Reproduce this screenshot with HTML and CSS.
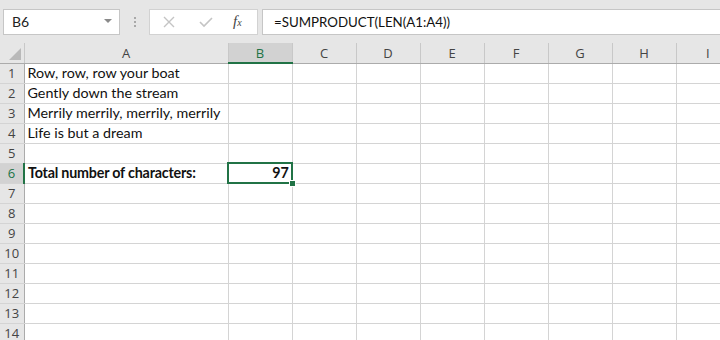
FILE: index.html
```html
<!DOCTYPE html>
<html lang="en">

<head>
    <meta charset="UTF-8">
    <meta name="viewport" content="width=device-width, initial-scale=1.0">
    <title>Sheet</title>
    <link rel="stylesheet" href="styles.css">
</head>

<body>
    <div class="toolbar">
        <div class="namebox">
            <span>B6</span>
            <svg class="caret" width="8" height="5" viewBox="0 0 8 5"><path d="M0 0h8L4 4z" fill="#8a8a8a"/></svg>
        </div>
        <div class="grip">
            <span></span><span></span><span></span>
        </div>
        <div class="fxbox">
            <svg width="12" height="12" viewBox="0 0 12 12"><path d="M1 1l10 10M11 1L1 11" stroke="#c4c4c4" stroke-width="1.4"/></svg>
            <svg width="14" height="12" viewBox="0 0 14 12"><path d="M1 6l4 4 8-8" stroke="#c4c4c4" stroke-width="1.6" fill="none"/></svg>
            <span class="fx">f<sub>x</sub></span>
        </div>
        <div class="formula">=SUMPRODUCT(LEN(A1:A4))</div>
    </div>

    <table class="sheet">
        <colgroup>
            <col class="c-head">
            <col class="c-a">
            <col class="c-n">
            <col class="c-n">
            <col class="c-n">
            <col class="c-n">
            <col class="c-n">
            <col class="c-n">
            <col class="c-n">
            <col>
        </colgroup>
        <thead>
            <tr>
                <th class="corner"><span class="tri"></span></th>
                <th>A</th>
                <th class="active">B</th>
                <th>C</th>
                <th>D</th>
                <th>E</th>
                <th>F</th>
                <th>G</th>
                <th>H</th>
                <th>I</th>
            </tr>
        </thead>
        <tbody>
            <tr><th>1</th><td>Row, row, row your boat</td><td></td><td></td><td></td><td></td><td></td><td></td><td></td><td></td></tr>
            <tr><th>2</th><td>Gently down the stream</td><td></td><td></td><td></td><td></td><td></td><td></td><td></td><td></td></tr>
            <tr><th>3</th><td>Merrily merrily, merrily, merrily</td><td></td><td></td><td></td><td></td><td></td><td></td><td></td><td></td></tr>
            <tr><th>4</th><td>Life is but a dream</td><td></td><td></td><td></td><td></td><td></td><td></td><td></td><td></td></tr>
            <tr><th>5</th><td></td><td></td><td></td><td></td><td></td><td></td><td></td><td></td><td></td></tr>
            <tr><th class="active">6</th><td class="bold">Total number of characters:</td><td class="bold num selected">97<span class="sel-box"></span><span class="handle"></span></td><td></td><td></td><td></td><td></td><td></td><td></td><td></td></tr>
            <tr><th>7</th><td></td><td></td><td></td><td></td><td></td><td></td><td></td><td></td><td></td></tr>
            <tr><th>8</th><td></td><td></td><td></td><td></td><td></td><td></td><td></td><td></td><td></td></tr>
            <tr><th>9</th><td></td><td></td><td></td><td></td><td></td><td></td><td></td><td></td><td></td></tr>
            <tr><th>10</th><td></td><td></td><td></td><td></td><td></td><td></td><td></td><td></td><td></td></tr>
            <tr><th>11</th><td></td><td></td><td></td><td></td><td></td><td></td><td></td><td></td><td></td></tr>
            <tr><th>12</th><td></td><td></td><td></td><td></td><td></td><td></td><td></td><td></td><td></td></tr>
            <tr><th>13</th><td></td><td></td><td></td><td></td><td></td><td></td><td></td><td></td><td></td></tr>
            <tr><th>14</th><td></td><td></td><td></td><td></td><td></td><td></td><td></td><td></td><td></td></tr>
        </tbody>
    </table>
</body>

</html>
```

FILE: styles.css
```css
body {
    margin: 0;
    width: 720px;
    height: 340px;
    overflow: hidden;
    background-color: white;
    font-family: 'Lato', sans-serif;
}

.toolbar {
    display: flex;
    align-items: center;
    height: 43px;
    padding-left: 3px;
    background-color: #e6e6e6;
    box-sizing: border-box;
}

.namebox {
    display: flex;
    align-items: center;
    justify-content: space-between;
    width: 117px;
    height: 26px;
    padding: 0 7px 0 8px;
    box-sizing: border-box;
    background-color: white;
    border: 1px solid #c6c6c6;
    font-size: 14px;
    color: #222;
}

.grip {
    display: flex;
    flex-direction: column;
    gap: 2px;
    margin: 0 13px 0 14px;
}

.grip span {
    width: 2px;
    height: 2px;
    background-color: #a8a8a8;
}

.fxbox {
    display: flex;
    align-items: center;
    width: 109px;
    height: 26px;
    padding-left: 13px;
    gap: 24px;
    box-sizing: border-box;
    background-color: white;
    border: 1px solid #d2d2d2;
}

.fx {
    font-family: 'Liberation Serif', serif;
    font-style: italic;
    font-size: 15px;
    color: #444;
    margin-left: -4px;
}

.fx sub {
    font-size: 10px;
    vertical-align: 0;
}

.formula {
    flex: 1;
    height: 26px;
    margin-left: 4px;
    padding-left: 11px;
    line-height: 24px;
    box-sizing: border-box;
    background-color: white;
    border: 1px solid #c6c6c6;
    border-right: none;
    font-size: 13.3px;
    color: #111;
}

.sheet {
    border-collapse: collapse;
    table-layout: fixed;
    width: 740px;
}

.c-head {
    width: 24px;
}

.c-a {
    width: 204px;
}

.c-n {
    width: 64px;
}

.sheet tr {
    height: 20px;
}

.sheet th {
    padding: 0;
    line-height: 16px;
    background-color: #e6e6e6;
    font-family: 'Open Sans', sans-serif;
    font-weight: normal;
    font-size: 13px;
    color: #444;
}

.sheet thead th {
    border-right: 1px solid #c8c8c8;
    border-bottom: 1px solid #ababab;
}

.sheet tbody th {
    border-right: 1px solid #ababab;
    border-bottom: 1px solid #d4d4d4;
    text-align: center;
}

.sheet thead th.active {
    background-color: #d2d2d2;
    color: #217346;
    border-bottom: 2px solid #217346;
}

.sheet tbody th.active {
    background-color: #d2d2d2;
    color: #217346;
    border-right: 2px solid #217346;
}

.corner {
    position: relative;
}

.tri {
    position: absolute;
    right: 3px;
    bottom: 3px;
    width: 0;
    height: 0;
    border-left: 12px solid transparent;
    border-bottom: 12px solid #b9b9b9;
}

.sheet td {
    padding: 0 3px;
    border-right: 1px solid #d4d4d4;
    border-bottom: 1px solid #d4d4d4;
    font-size: 14.3px;
    line-height: 16px;
    color: #111;
    white-space: nowrap;
    overflow: visible;
}

.bold {
    font-weight: bold;
    letter-spacing: -0.2px;
}

.num {
    text-align: right;
}

.selected {
    position: relative;
}

.sel-box {
    position: absolute;
    left: -2px;
    top: -2px;
    right: -1px;
    bottom: -1px;
    border: 2px solid #217346;
}

.handle {
    position: absolute;
    right: -4px;
    bottom: -4px;
    width: 5px;
    height: 5px;
    background-color: #217346;
    border: 1px solid white;
}
```
